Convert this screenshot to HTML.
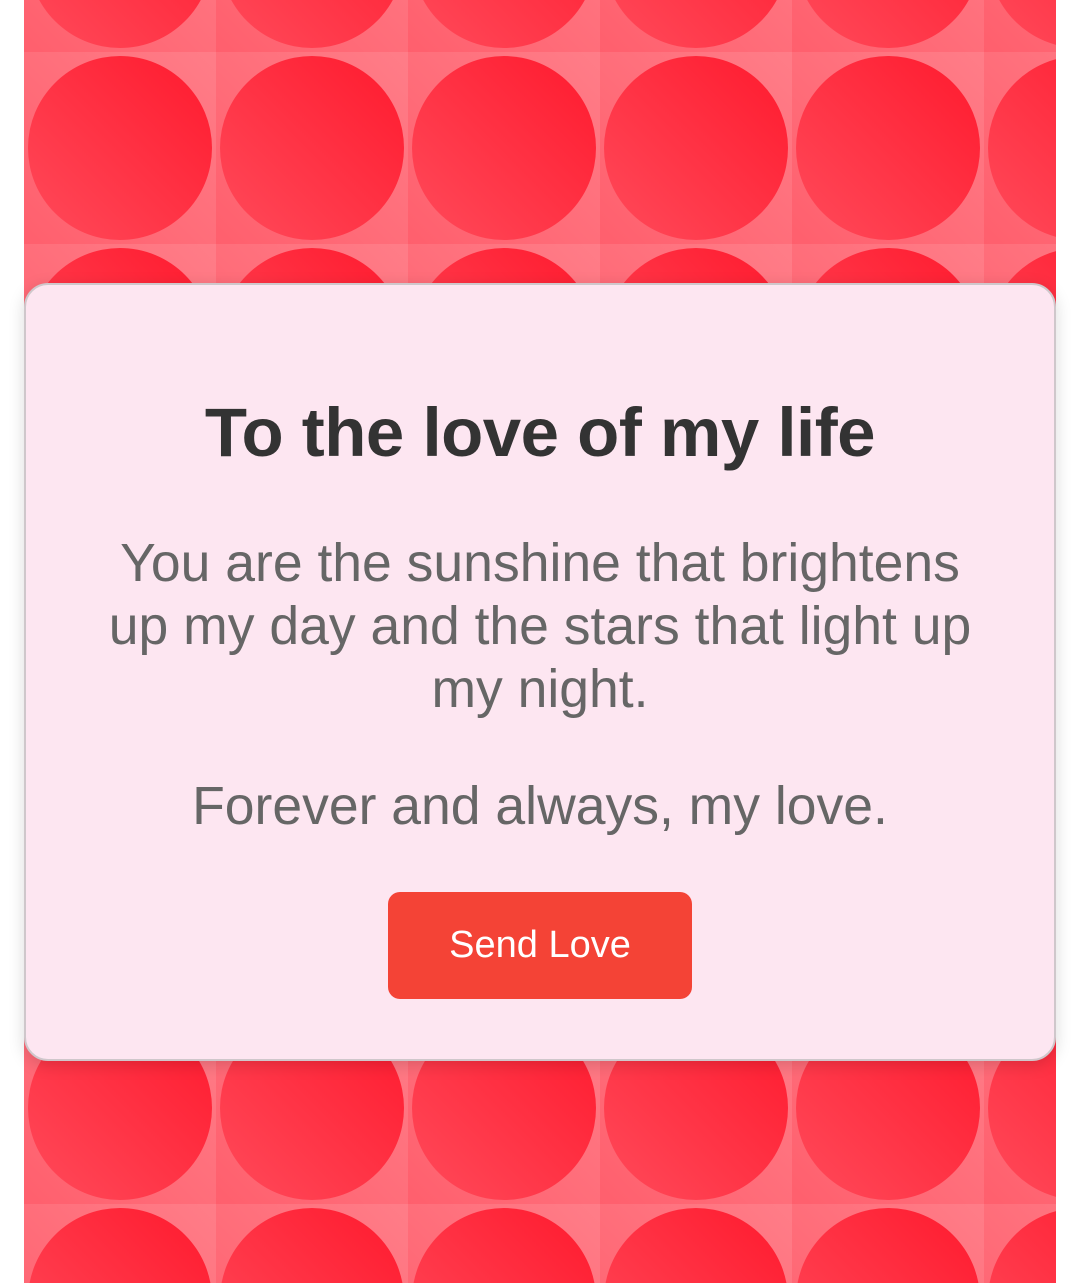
<!DOCTYPE html>
<html><head><meta charset="utf-8"><style>
html,body{margin:0;padding:0;width:1080px;height:1283px;overflow:hidden;background:#fff;font-family:"Liberation Sans",Roboto,sans-serif;position:relative;}
.bg{position:absolute;left:24px;top:0;width:1032px;height:1283px;
background-image:linear-gradient(45deg,#ff5f6d,#ff7d88);
background-size:192px 192px;background-position:0 52px;}
#circles{position:absolute;left:0;top:0;width:1056px;height:1283px;overflow:hidden;}
.c{position:absolute;width:184px;height:184px;border-radius:50%;background:linear-gradient(45deg,#ff4a5a,#ff1a2e);}
.card{position:absolute;left:24px;top:283px;width:1028px;height:774px;background:#fde6f1;border:2px solid #cfc7cb;border-radius:24px;box-shadow:0 4px 16px rgba(0,0,0,.15);}
h1{margin:0;position:absolute;top:393px;left:0;width:1080px;text-align:center;font-size:69px;font-weight:bold;color:#333;letter-spacing:-0.5px;}
.p{position:absolute;left:0;width:1080px;text-align:center;color:#666;font-size:53.5px;line-height:63px;}
.btn{position:absolute;left:388px;top:892px;width:304px;height:107px;background:#f44336;border-radius:12px;color:#fff;font-size:38px;line-height:107px;text-align:center;}
</style></head><body>
<div class="bg"></div>
<div id="circles"></div>
<div class="card"></div>
<h1>To the love of my life</h1>
<div class="p" style="top:532px;">You are the sunshine that brightens<br>up my day and the stars that light up<br>my night.</div>
<div class="p" style="top:775px;">Forever and always, my love.</div>
<div class="btn">Send Love</div>
<script>
var h='';for(var r=-1;r<7;r++){for(var c=0;c<6;c++){var x=24+c*192+4,y=52+r*192+4;h+='<div class="c" style="left:'+x+'px;top:'+y+'px"></div>';}}
document.getElementById('circles').innerHTML=h;
</script>
</body></html>
